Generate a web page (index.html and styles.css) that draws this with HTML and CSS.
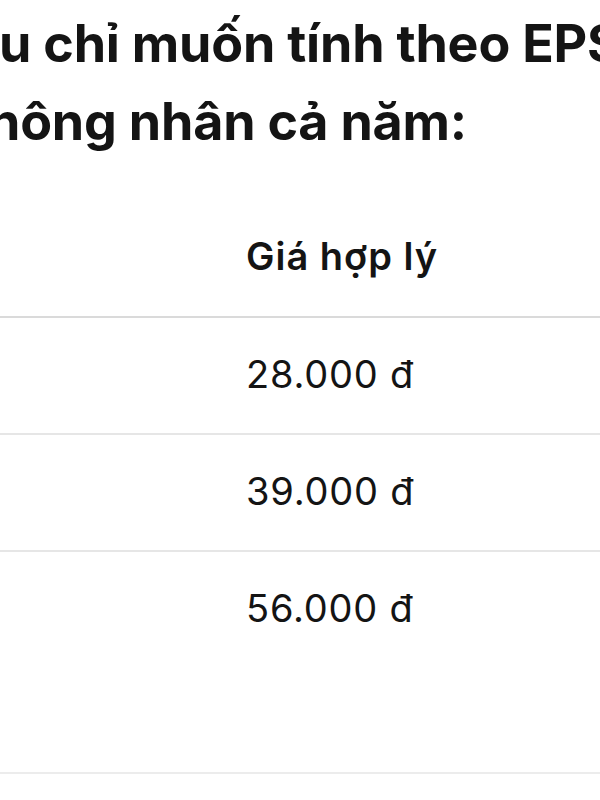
FILE: index.html
```html
<!DOCTYPE html>
<html lang="vi">
<head>
<meta charset="utf-8">
<title>Giá hợp lý</title>
<link rel="stylesheet" href="styles.css">
</head>
<body>
<main class="page">
  <h2 class="title">
    <span class="line line-1">u chỉ muốn tính theo EPS quý</span>
    <span class="line line-2">hông nhân cả năm:</span>
  </h2>
  <table class="price-table">
    <thead>
      <tr>
        <th class="col-label"></th>
        <th class="col-price">Giá hợp lý</th>
      </tr>
    </thead>
    <tbody>
      <tr>
        <td class="col-label"></td>
        <td class="col-price">28.000 đ</td>
      </tr>
      <tr>
        <td class="col-label"></td>
        <td class="col-price">39.000 đ</td>
      </tr>
      <tr class="row-tall">
        <td class="col-label"></td>
        <td class="col-price">56.000 đ</td>
      </tr>
    </tbody>
  </table>
</main>
</body>
</html>
```
FILE: styles.css
```css
html, body {
  margin: 0;
  padding: 0;
  background: #ffffff;
}

body {
  width: 600px;
  overflow: hidden;
  font-family: Inter, "Noto Sans", "Liberation Sans", sans-serif;
  color: #141414;
}

.page {
  padding-top: 5px;
}

.title {
  margin: 0;
  font-size: 52px;
  font-weight: 700;
  line-height: 78px;
  white-space: nowrap;
  overflow: hidden;
  letter-spacing: -0.2px;
}

.line {
  display: block;
}

.line-1 {
  margin-left: -1px;
}

.line-2 {
  margin-left: -12px;
}

.price-table {
  margin-top: 39px;
  width: 100%;
  border-collapse: collapse;
  table-layout: fixed;
  font-size: 38px;
  line-height: 52px;
}

.price-table th,
.price-table td {
  text-align: left;
  vertical-align: top;
  padding: 30px 16px 34px;
}

.price-table th {
  font-weight: 600;
  letter-spacing: 1px;
}

.col-label {
  width: 198px;
}

.price-table thead tr {
  border-bottom: 2px solid #dadada;
}

.price-table tbody tr {
  border-bottom: 2px solid #e6e6e6;
}

.price-table tbody td {
  padding: 30px 16px 33px;
  letter-spacing: 0.8px;
}

.price-table tbody tr.row-tall {
  height: 222px;
  border-bottom-color: #ececec;
}
```
